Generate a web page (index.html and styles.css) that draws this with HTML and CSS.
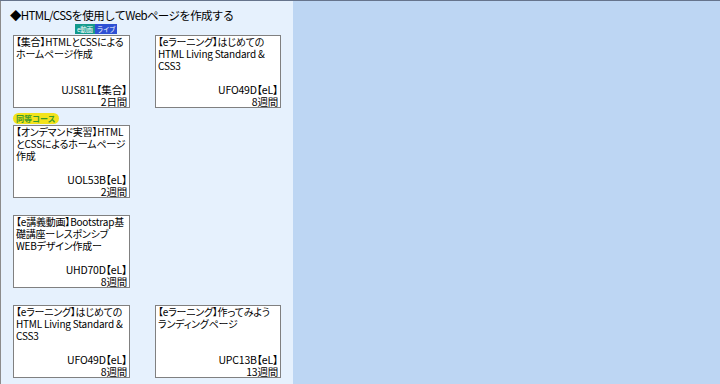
FILE: index.html
```html
<!DOCTYPE html>
<html lang="ja">
<head>
    <meta charset="UTF-8">
    <meta name="viewport" content="width=device-width, initial-scale=1.0">
    <title>コース一覧</title>
    <link rel="stylesheet" href="styles.css">
</head>
<body>
    <div class="panel">
        <h1 class="title">◆HTML/CSSを使用してWebページを作成する</h1>
        <div class="courses">
            <div class="item">
                <div class="tags tags-right">
                    <span class="tag tag-video">e動画</span><span class="tag tag-live">ライブ</span>
                </div>
                <div class="card">
                    <p class="name">【集合】HTMLとCSSによる<br>ホームページ作成</p>
                    <div class="meta">
                        <p>UJS81L【集合】</p>
                        <p>2日間</p>
                    </div>
                </div>
            </div>
            <div class="item">
                <div class="tags"></div>
                <div class="card">
                    <p class="name">【eラーニング】はじめての<br>HTML Living Standard &amp;<br>CSS3</p>
                    <div class="meta">
                        <p>UFO49D【eL】</p>
                        <p>8週間</p>
                    </div>
                </div>
            </div>

            <div class="item">
                <div class="tags">
                    <span class="pill">同等コース</span>
                </div>
                <div class="card">
                    <p class="name">【オンデマンド実習】HTML<br>とCSSによるホームページ<br>作成</p>
                    <div class="meta">
                        <p>UOL53B【eL】</p>
                        <p>2週間</p>
                    </div>
                </div>
            </div>
            <div class="item"></div>

            <div class="item">
                <div class="tags"></div>
                <div class="card">
                    <p class="name">【e講義動画】Bootstrap基<br>礎講座ーレスポンシブ<br>WEBデザイン作成ー</p>
                    <div class="meta">
                        <p>UHD70D【eL】</p>
                        <p>8週間</p>
                    </div>
                </div>
            </div>
            <div class="item"></div>

            <div class="item">
                <div class="tags"></div>
                <div class="card">
                    <p class="name">【eラーニング】はじめての<br>HTML Living Standard &amp;<br>CSS3</p>
                    <div class="meta">
                        <p>UFO49D【eL】</p>
                        <p>8週間</p>
                    </div>
                </div>
            </div>
            <div class="item">
                <div class="tags"></div>
                <div class="card">
                    <p class="name">【eラーニング】作ってみよう<br>ランディングページ</p>
                    <div class="meta">
                        <p>UPC13B【eL】</p>
                        <p>13週間</p>
                    </div>
                </div>
            </div>
        </div>
    </div>
</body>
</html>
```

FILE: styles.css
```css
* {
    margin: 0;
    padding: 0;
    box-sizing: border-box;
}
body {
    width: 720px;
    height: 384px;
    overflow: hidden;
    background: #bdd6f3;
    border-top: 1px solid #66748c;
    font-family: "Noto Sans CJK JP", "Noto Sans", sans-serif;
    color: #000;
}
.panel {
    width: 293px;
    height: 383px;
    background: #e6f1fd;
    border-left: 1px solid #8c8c8c;
    padding: 6px 0 0 9px;
}
.title {
    font-size: 11.5px;
    font-weight: normal;
    line-height: 16px;
    letter-spacing: -0.65px;
}
.courses {
    display: grid;
    grid-template-columns: 117px 126px;
    column-gap: 25px;
    row-gap: 5px;
    padding-left: 3px;
}
.item {
    display: flex;
    flex-direction: column;
}
.tags {
    height: 12px;
    display: flex;
    align-items: flex-start;
}
.tags-right {
    padding-left: 62px;
    padding-top: 1px;
}
.tag {
    display: inline-block;
    height: 10px;
    line-height: 10px;
    font-size: 6.5px;
    color: #fff;
    padding: 0 2px;
    white-space: nowrap;
    letter-spacing: -0.3px;
}
.tag-video {
    background: #139a8c;
}
.tag-live {
    background: #2d50d4;
}
.pill {
    display: inline-block;
    height: 11px;
    line-height: 11px;
    font-size: 8px;
    color: #3a9a2a;
    background: #f3e31c;
    border-radius: 6px;
    padding: 0 3px;
    font-weight: bold;
}
.card {
    height: 73px;
    background: #fff;
    border: 1px solid #808080;
    display: flex;
    flex-direction: column;
    overflow: hidden;
    padding: 0 2px;
    font-size: 10px;
    line-height: 12px;
    font-feature-settings: "palt";
    letter-spacing: -0.2px;
}
.name {
    white-space: nowrap;
}
.meta {
    margin-top: auto;
    margin-bottom: -1px;
    text-align: right;
    line-height: 12px;
    font-size: 10.5px;
}
```
